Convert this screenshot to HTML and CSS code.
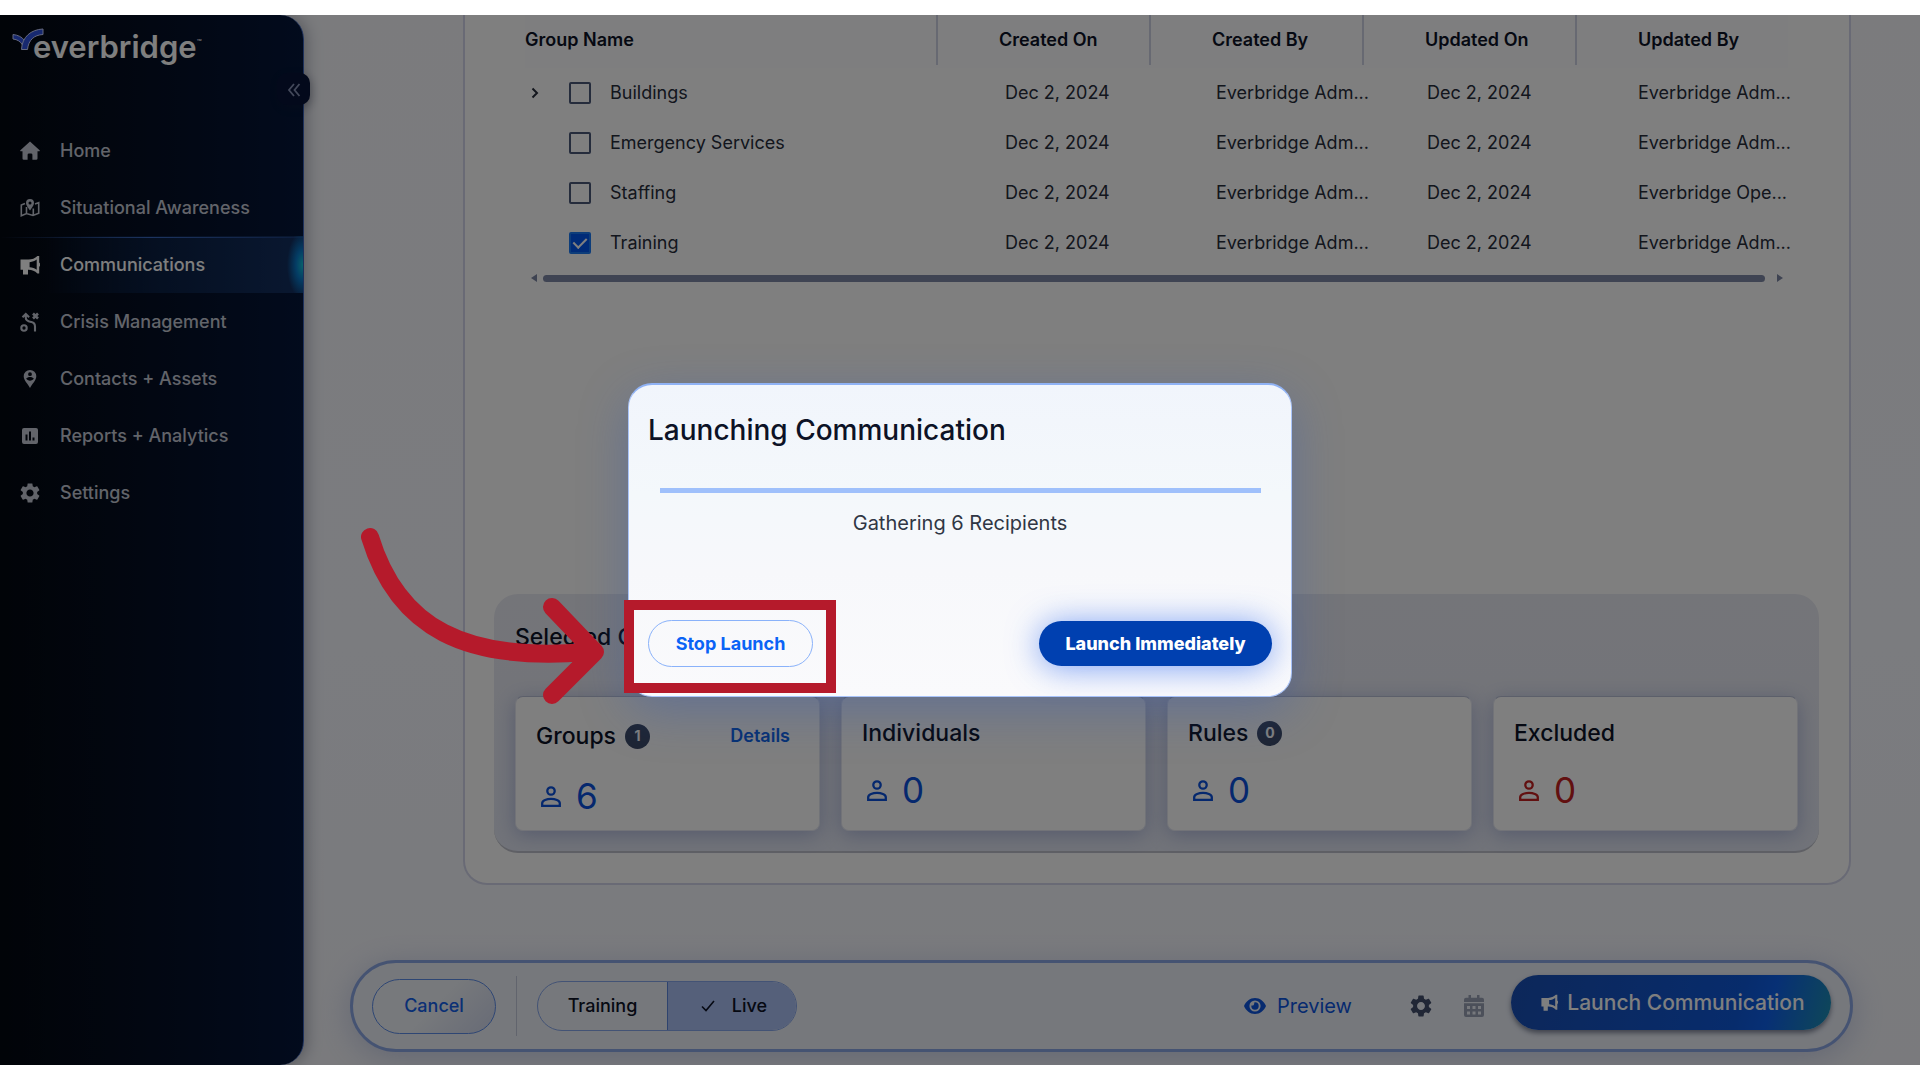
FILE: index.html
```html
<!DOCTYPE html>
<html lang="en">
<head>
<meta charset="utf-8">
<meta name="viewport" content="width=device-width, initial-scale=1">
<title>Everbridge – Launching Communication</title>
<link rel="stylesheet" href="styles.css">
</head>
<body>
<svg class="sprite" aria-hidden="true">
  <symbol id="i-bullhorn" viewBox="0 0 20 20"><path fill-rule="evenodd" d="M.5 4.6H8.5C12 4.6 15 3.4 17.400 1H19.200V7.600L20 8.400V11L19.200 11.800V18.400H17.400C15 16 12 14.800 8.500 14.800H8V19.600H3V14.800H.5ZM9.600 7.200V12.200C12.400 12.400 14.800 13.300 16.700 14.800V4.600C14.800 6.100 12.400 7 9.600 7.200Z"/></symbol>
  <symbol id="i-gear" viewBox="2 2 20 20"><path d="M19.14,12.94c0.04-0.3,0.06-0.61,0.06-0.94c0-0.32-0.02-0.64-0.07-0.94l2.03-1.58c0.18-0.14,0.23-0.41,0.12-0.61l-1.92-3.32c-0.12-0.22-0.37-0.29-0.59-0.22l-2.39,0.96c-0.5-0.38-1.03-0.7-1.62-0.94L14.4,2.81c-0.04-0.24-0.24-0.41-0.48-0.41h-3.84c-0.24,0-0.43,0.17-0.47,0.41L9.25,5.35C8.66,5.59,8.12,5.92,7.63,6.29L5.24,5.33c-0.22-0.08-0.47,0-0.59,0.22L2.74,8.87C2.62,9.08,2.66,9.34,2.86,9.48l2.03,1.58C4.84,11.36,4.8,11.69,4.8,12s0.02,0.64,0.07,0.94l-2.03,1.58c-0.18,0.14-0.23,0.41-0.12,0.61l1.92,3.32c0.12,0.22,0.37,0.29,0.59,0.22l2.39-0.96c0.5,0.38,1.03,0.7,1.62,0.94l0.36,2.54c0.05,0.24,0.24,0.41,0.48,0.41h3.84c0.24,0,0.44-0.17,0.47-0.41l0.36-2.54c0.59-0.24,1.13-0.56,1.62-0.94l2.39,0.96c0.22,0.08,0.47,0,0.59-0.22l1.92-3.32c0.12-0.22,0.07-0.47-0.12-0.61L19.14,12.94z M12,15.6c-1.98,0-3.6-1.62-3.6-3.6s1.62-3.6,3.6-3.6s3.6,1.62,3.6,3.6S13.98,15.6,12,15.6z"/></symbol>
  <symbol id="i-person" viewBox="0 0 20 21"><g fill="none" stroke="currentColor" stroke-width="2.300"><circle cx="10" cy="5" r="3.700"/><path d="M1.200 19.800V17.300C1.200 14.300 6 12.900 10 12.900S18.800 14.300 18.800 17.300V19.800Z"/></g></symbol>
  <symbol id="i-check" viewBox="0 0 14 12"><path fill="none" stroke="currentColor" stroke-width="1.600" d="M1 6.500L5 10.500L13 1"/></symbol>
</svg>

<div class="app">
  <aside class="sidebar">
    <div class="brand">
      <svg class="brand-mark" viewBox="0 0 32 24" aria-hidden="true"><g fill="#2f52e0" stroke="#c9d2ff" stroke-width="1"><path d="M1 6.500C6 7 10 9 12.500 12.500L10.500 17C8.500 13.500 5.500 11.500 1 11Z"/><path d="M31 1V6.500C22 7 16.500 12 15.500 21.500H9.500C10 9 19 1.500 31 1Z"/></g></svg>
      <span class="brand-name">everbridge</span><span class="brand-tm">™</span>
    </div>
    <button class="collapse" type="button" aria-label="Collapse menu"><svg viewBox="0 0 14 14"><path fill="none" stroke="currentColor" stroke-width="1.800" d="M7 1L2 7L7 13M12.500 1L7.500 7L12.500 13"/></svg></button>
    <nav class="nav">
      <a href="#"><svg viewBox="0 0 20 20"><path d="M10 .6L19.600 9.200C20 9.700 19.700 10.200 19.200 10.200H17.500V17.500Q17.500 18.800 16.200 18.800H12.400V13.800Q12.400 12.400 11 12.400H9Q7.600 12.400 7.600 13.800V18.800H3.800Q2.500 18.800 2.500 17.500V10.200H.8C.3 10.200 0 9.700 .4 9.200Z"/></svg>Home</a>
      <a href="#"><svg viewBox="0 0 20 20"><g fill="none" stroke="currentColor" stroke-width="1.600"><path d="M5 5.500L1.300 7V17.800L6.500 15.500L13 17.500L18.700 15.200V4.600L15 6M6.500 9V15.500M13.300 10.500V17.500"/></g><path fill-rule="evenodd" d="M10 1A4 4 0 0 1 14 5C14 7.500 11.500 10.200 10 12.400C8.500 10.200 6 7.500 6 5A4 4 0 0 1 10 1ZM10 3.500A1.500 1.500 0 1 0 10 6.500A1.500 1.500 0 1 0 10 3.500Z"/></svg>Situational Awareness</a>
      <a href="#" class="active" aria-current="page"><svg><use href="#i-bullhorn"/></svg>Communications</a>
      <a href="#"><svg viewBox="0 0 20 20"><g fill="none" stroke="currentColor" stroke-width="2.100"><circle cx="4" cy="16" r="2.700"/><path d="M5.800 2.500V6C5.800 9 9 9.500 11.500 10S15 12 15 14.500V19.500M2.500 5.200L5.800 1.900L9.100 5.200"/><path stroke-width="2.600" d="M13 1.500L18 6.500M18 1.500L13 6.500"/></g></svg>Crisis Management</a>
      <a href="#"><svg viewBox="0 0 20 20"><path fill-rule="evenodd" d="M10 1A6.300 6.300 0 0 1 16.300 7.300C16.300 11.500 12 15 10 19C8 15 3.700 11.500 3.700 7.300A6.300 6.300 0 0 1 10 1ZM10 3.300A1.900 1.900 0 1 0 10 7.100A1.900 1.900 0 1 0 10 3.300ZM6.200 9.600C7 11 8.400 11.700 10 11.700S13 11 13.800 9.600C13.300 8.500 11.300 8 10 8S6.700 8.500 6.200 9.600Z"/></svg>Contacts + Assets</a>
      <a href="#"><svg viewBox="0 0 20 20"><path fill-rule="evenodd" d="M4 2H16Q18 2 18 4V16Q18 18 16 18H4Q2 18 2 16V4Q2 2 4 2ZM5.500 8.500V14.500H7.500V8.500ZM9 5.500V14.500H11V5.500ZM12.500 11.500V14.500H14.500V11.500Z"/></svg>Reports + Analytics</a>
      <a href="#"><svg><use href="#i-gear"/></svg>Settings</a>
    </nav>
  </aside>

  <main class="main">
    <section class="card">
      <table class="groups">
        <thead>
          <tr><th>Group Name</th><th>Created On</th><th>Created By</th><th>Updated On</th><th>Updated By</th></tr>
        </thead>
        <tbody>
          <tr><td><button class="expand" type="button" aria-label="Expand Buildings"><svg viewBox="0 0 8 12"><path fill="none" stroke="currentColor" stroke-width="2" d="M1.500 1.500L6 6L1.500 10.500"/></svg></button><input type="checkbox" id="g1"><label for="g1">Buildings</label></td><td>Dec 2, 2024</td><td>Everbridge Adm...</td><td>Dec 2, 2024</td><td>Everbridge Adm...</td></tr>
          <tr><td><span class="expand"></span><input type="checkbox" id="g2"><label for="g2">Emergency Services</label></td><td>Dec 2, 2024</td><td>Everbridge Adm...</td><td>Dec 2, 2024</td><td>Everbridge Adm...</td></tr>
          <tr><td><span class="expand"></span><input type="checkbox" id="g3"><label for="g3">Staffing</label></td><td>Dec 2, 2024</td><td>Everbridge Adm...</td><td>Dec 2, 2024</td><td>Everbridge Ope...</td></tr>
          <tr><td><span class="expand"></span><input type="checkbox" id="g4" checked><label for="g4">Training</label></td><td>Dec 2, 2024</td><td>Everbridge Adm...</td><td>Dec 2, 2024</td><td>Everbridge Adm...</td></tr>
        </tbody>
      </table>
      <div class="hscroll" aria-hidden="true">
        <svg viewBox="0 0 6 8"><path d="M6 0V8L0 4Z"/></svg><span class="hscroll-thumb"></span><svg viewBox="0 0 6 8"><path d="M0 0V8L6 4Z"/></svg>
      </div>

      <section class="selected">
        <h2>Selected C</h2>
        <div class="tiles">
          <article class="tile">
            <header><h3>Groups</h3><span class="badge">1</span><a class="details" href="#">Details</a></header>
            <p class="count"><svg><use href="#i-person"/></svg>6</p>
          </article>
          <article class="tile">
            <header><h3>Individuals</h3></header>
            <p class="count"><svg><use href="#i-person"/></svg>0</p>
          </article>
          <article class="tile">
            <header><h3>Rules</h3><span class="badge">0</span></header>
            <p class="count"><svg><use href="#i-person"/></svg>0</p>
          </article>
          <article class="tile">
            <header><h3>Excluded</h3></header>
            <p class="count excluded"><svg><use href="#i-person"/></svg>0</p>
          </article>
        </div>
      </section>
    </section>

    <footer class="actions">
      <button class="cancel" type="button">Cancel</button>
      <span class="divider"></span>
      <div class="mode" role="radiogroup" aria-label="Mode">
        <input type="radio" name="mode" id="m-training"><label for="m-training">Training</label>
        <input type="radio" name="mode" id="m-live" checked><label for="m-live" class="live"><svg><use href="#i-check"/></svg>Live</label>
      </div>
      <div class="tools">
        <button class="preview" type="button"><svg viewBox="0 0 22 16"><path fill-rule="evenodd" d="M11 0C16 0 20 3.500 22 8C20 12.500 16 16 11 16S2 12.500 0 8C2 3.500 6 0 11 0ZM11 2.400A5.600 5.600 0 1 0 11 13.600A5.600 5.600 0 1 0 11 2.400Z"/><path d="M11 4.300A3.700 3.700 0 1 1 7.300 8Q7.400 7.600 7.500 7.400Q10.400 8 10.300 4.400Z"/></svg>Preview</button>
        <button class="tool" type="button" aria-label="Settings"><svg><use href="#i-gear"/></svg></button>
        <button class="tool muted" type="button" aria-label="Schedule"><svg viewBox="0 0 20 22"><path fill-rule="evenodd" d="M4.500 0H7V2.800H13V0H15.500V2.800H18Q20 2.800 20 4.800V7H0V4.800Q0 2.800 2 2.800H4.500ZM0 8.300H20V20Q20 22 18 22H2Q0 22 0 20ZM3 11V14H6V11ZM8.500 11V14H11.500V11ZM14 11V14H17V11ZM3 16.500V19.500H6V16.500ZM8.500 16.500V19.500H11.500V16.500ZM14 16.500V19.500H17V16.500Z"/></svg></button>
      </div>
      <button class="launch" type="button"><svg><use href="#i-bullhorn"/></svg>Launch Communication</button>
    </footer>
  </main>

  <div class="backdrop">
    <div class="modal" role="dialog" aria-modal="true" aria-labelledby="modal-title">
      <h1 id="modal-title">Launching Communication</h1>
      <progress value="100" max="100" aria-label="Launch progress"></progress>
      <p>Gathering 6 Recipients</p>
      <div class="modal-actions">
        <button class="stop" type="button">Stop Launch</button>
        <button class="now" type="button">Launch Immediately</button>
      </div>
      <span class="callout-box"></span>
      <svg class="callout-arrow" viewBox="0 0 250 186" aria-hidden="true"><path d="M12 12C40 104 108 137 229 127M194 82L237 127L194 170"/></svg>
    </div>
  </div>
</div>
</body>
</html>
```
FILE: styles.css
```css
* { box-sizing: border-box; }

body {
  margin: 0;
  padding: 15px 0;
  min-height: 100vh;
  display: flex;
  background: #fff;
  font-family: Inter, "Liberation Sans", sans-serif;
  font-size: 18px;
  line-height: 24px;
  color: #262c3a;
}

h1, h2, h3, p { margin: 0; font-weight: 500; }
button { font: inherit; color: inherit; border: 0; padding: 0; background: none; }
a { color: inherit; text-decoration: none; }
svg { fill: currentColor; flex: none; }
.sprite { position: absolute; width: 0; height: 0; }

.app {
  position: relative;
  flex: 1;
  display: flex;
  overflow: hidden;
  background: linear-gradient(#f6f7fb, #f6f8ff 60%, #f4f5fa);
}

/* Sidebar */
.sidebar {
  position: relative;
  flex: none;
  width: 304px;
  border-right: 1px solid #3c63b8;
  border-radius: 0 24px 24px 0;
  background: linear-gradient(90deg, #030810, #040d20 40%, #04163a);
  box-shadow: 2px 0 16px rgba(20, 25, 50, .35);
  color: #c4c8d4;
}

.brand {
  display: flex;
  align-items: flex-start;
  height: 107px;
  padding: 13px 0 0 12px;
  color: #fff;
}
.brand-mark { width: 32px; height: 24px; }
.brand-name {
  margin-left: -11px;
  font-size: 31px;
  line-height: 38px;
  font-weight: 600;
}
.brand-tm { margin-top: 6px; font-size: 8px; line-height: 16px; }

.collapse {
  position: absolute;
  top: 58px;
  right: -7px;
  width: 33px;
  height: 32px;
  padding-top: 4px;
  border-radius: 10px;
  background: #061237;
  box-shadow: 2px 3px 8px rgba(20, 25, 50, .3);
  color: #8792b4;
}
.collapse svg { width: 14px; height: 14px; }

.nav { display: flex; flex-direction: column; }
.nav a {
  display: flex;
  align-items: center;
  gap: 20px;
  height: 57px;
  padding-left: 20px;
  border-top: 1px solid transparent;
  font-weight: 500;
}
.nav svg { width: 20px; height: 20px; }
.nav .active {
  color: #fff;
  background:
    radial-gradient(ellipse 16px 34px at 100% 50%, #10c4d8, #0878c8 45%, transparent),
    linear-gradient(90deg, transparent, #3a68c0 50%, #1a3a78) top / 100% 1px no-repeat,
    linear-gradient(90deg, transparent 15%, #0a1f42 50%, #143062);
}

/* Main column */
.main {
  flex: 1;
  min-width: 0;
  display: flex;
  flex-direction: column;
  padding: 0 67px 13px 46px;
}

.card {
  flex: 1;
  display: flex;
  flex-direction: column;
  margin: 0 2px 75px 113px;
  padding: 0 30px 30px 29px;
  border: 2px solid #d2d5ea;
  border-top: 0;
  border-radius: 0 0 24px 24px;
  background: #fff;
}

.groups { display: block; margin: 0 31px; }
.groups thead, .groups tbody { display: block; }
.groups tr { display: grid; align-items: center; }
.groups th, .groups td { padding: 0 0 0 61px; text-align: left; white-space: nowrap; }
.groups th:first-child, .groups td:first-child { padding-left: 0; }
.groups thead tr { grid-template-columns: 1fr repeat(4, 213px); align-items: start; height: 53px; background: #fdfdfe; }
.groups th { line-height: 50px; font-weight: 600; color: #0c1226; }
.groups th + th { border-left: 2px solid #ced3e4; }
.groups tbody tr { grid-template-columns: 1fr repeat(4, 211px); height: 50px; }
.groups td:first-child { display: flex; align-items: center; }

.expand { width: 44px; height: 24px; padding-left: 6px; text-align: left; }
.expand svg { display: block; width: 8px; height: 12px; }

.groups input {
  appearance: none;
  display: grid;
  place-items: center;
  width: 22px;
  height: 22px;
  margin: 0 19px 0 0;
  border: 2px solid #4a5878;
  border-radius: 2px;
}
.groups input:checked { background: #0056f0; border-color: #1a7af5; }
.groups input:checked::after {
  content: "";
  width: 6px;
  height: 11px;
  margin-bottom: 3px;
  border: solid #fff;
  border-width: 0 2px 2px 0;
  transform: rotate(45deg);
}

.hscroll {
  display: flex;
  align-items: center;
  gap: 6px;
  margin: 4px 36px 0 37px;
  height: 12px;
  color: #7d86a4;
}
.hscroll svg { width: 6px; height: 8px; }
.hscroll-thumb { flex: 1; height: 7px; border-radius: 4px; background: #7f88a6; }
.hscroll svg:last-child { margin-left: 6px; }

.selected {
  margin-top: auto;
  padding: 28px 21px 20px;
  border-bottom: 2px solid #bfc1cb;
  border-radius: 24px;
  background: linear-gradient(#e9eaf2, #e3e7f3);
}
.selected h2 { font-size: 23px; line-height: 30px; color: #0c1226; }
.tiles { display: grid; grid-template-columns: repeat(4, 1fr); gap: 21px; margin-top: 44px; }
.tile {
  height: 135px;
  padding: 20px;
  border: 1px solid #e4e7f1;
  border-top-color: #b8bfd4;
  border-radius: 8px;
  background: #fff;
  box-shadow: 0 4px 20px rgba(70, 90, 170, .35);
}
.tile header { display: flex; align-items: center; gap: 9px; min-height: 32px; }
.tile h3 { font-size: 23px; line-height: 32px; color: #0c1226; }
.badge {
  display: grid;
  place-items: center;
  width: 25px;
  height: 25px;
  border-radius: 50%;
  background: #3d4b68;
  color: #fff;
  font-size: 14px;
  font-weight: 700;
}
.details { margin: 0 9px 0 auto; line-height: 38px; color: #0f62e6; font-weight: 600; }
.count {
  display: flex;
  align-items: center;
  gap: 15px;
  margin: 17px 0 0 5px;
  font-size: 35px;
  line-height: 48px;
  font-weight: 400;
  color: #0a50dc;
}
.count svg { width: 20px; height: 21px; }
.count.excluded { color: #c42020; }

/* Bottom action bar */
.actions {
  display: flex;
  align-items: center;
  height: 92px;
  padding: 0 19px;
  border: 3px solid #8ba6e4;
  border-radius: 46px;
  background: #ecf0f9;
  box-shadow: 0 6px 30px rgba(100, 120, 190, .3);
}
.cancel {
  width: 124px;
  height: 55px;
  border: 1px solid #5c8ce8;
  border-radius: 28px;
  background: linear-gradient(135deg, #eef2f8 50%, #cfd6ec);
  color: #1560ea;
  font-weight: 500;
}
.divider { width: 1px; height: 60px; margin: 0 20px; background: #c2c8da; }
.mode {
  display: flex;
  height: 50px;
  border: 1px solid #86a6ea;
  border-radius: 25px;
  overflow: hidden;
  color: #0c1226;
  font-weight: 500;
}
.mode input { position: absolute; opacity: 0; pointer-events: none; }
.mode label { display: flex; align-items: center; justify-content: center; width: 129px; }
.mode .live { gap: 17px; padding-left: 4px; border-left: 1px solid #5c86dc; background: #aac0f4; }
.mode .live svg { width: 14px; height: 12px; }
.tools { display: flex; align-items: center; gap: 32px; margin-left: auto; }
.preview { display: flex; align-items: center; gap: 11px; margin-right: 26px; color: #0d55de; font-size: 20px; }
.preview svg { width: 22px; height: 16px; }
.tool { display: flex; color: #424e6c; }
.tool svg { width: 22px; height: 22px; }
.tool.muted { color: #98a0b4; }
.tool.muted svg { width: 20px; }
.launch {
  display: flex;
  align-items: center;
  justify-content: center;
  gap: 9px;
  width: 320px;
  height: 55px;
  margin: 0 0 7px 27px;
  padding-left: 4px;
  border-radius: 28px;
  background: linear-gradient(105deg, #1a4fb4, #0f58d8 70%, #0f60ea 80%, #1e90b0);
  box-shadow: 0 3px 5px rgba(20, 30, 60, .5);
  color: #fff;
  font-size: 21px;
  font-weight: 500;
}
.launch svg { width: 17px; height: 17px; }

/* Modal */
.backdrop {
  position: absolute;
  inset: 0;
  display: flex;
  align-items: center;
  justify-content: center;
  background: rgba(0, 0, 0, .5);
}
.modal {
  position: relative;
  display: flex;
  flex-direction: column;
  width: 664px;
  padding: 25px 19px 29px;
  border: 1px solid #a9c4fa;
  border-top: 2px solid #8fb2f5;
  border-radius: 24px;
  background: linear-gradient(#f1f5fc, #f4f8fb 35%, #f7f8fb 60%, #fafafc);
  box-shadow: 0 14px 48px rgba(50, 90, 180, .35);
}
.modal h1 { font-size: 28px; line-height: 40px; color: #0c1226; }
.modal progress {
  appearance: none;
  display: block;
  height: 5px;
  width: auto;
  margin: 38px 11px 0 12px;
  border: 0;
  background: #d3e2fd;
}
.modal progress::-webkit-progress-bar { background: #d3e2fd; }
.modal progress::-webkit-progress-value { background: #9fc0fb; }
.modal p { margin-top: 16px; font-size: 20px; line-height: 28px; font-weight: 400; text-align: center; color: #303644; }
.modal-actions { display: flex; align-items: center; justify-content: space-between; margin-top: 83px; }
.modal-actions .stop {
  width: 165px;
  height: 47px;
  border: 1px solid #8ab2fa;
  border-radius: 24px;
  color: #0a63f6;
  font-weight: 700;
}
.modal-actions .now {
  width: 233px;
  height: 45px;
  border-radius: 23px;
  background: #0040b0;
  box-shadow: 0 2px 32px rgba(40, 100, 240, .6);
  color: #fff;
  font-weight: 800;
}

.callout-box {
  position: absolute;
  left: -5px;
  bottom: 3px;
  width: 212px;
  height: 93px;
  border: 10px solid #b51a2b;
}
.callout-arrow {
  position: absolute;
  left: -271px;
  bottom: -15px;
  width: 250px;
  height: 186px;
  fill: none;
  stroke: #b51a2b;
  stroke-width: 18;
  stroke-linecap: round;
  stroke-linejoin: round;
}
```
